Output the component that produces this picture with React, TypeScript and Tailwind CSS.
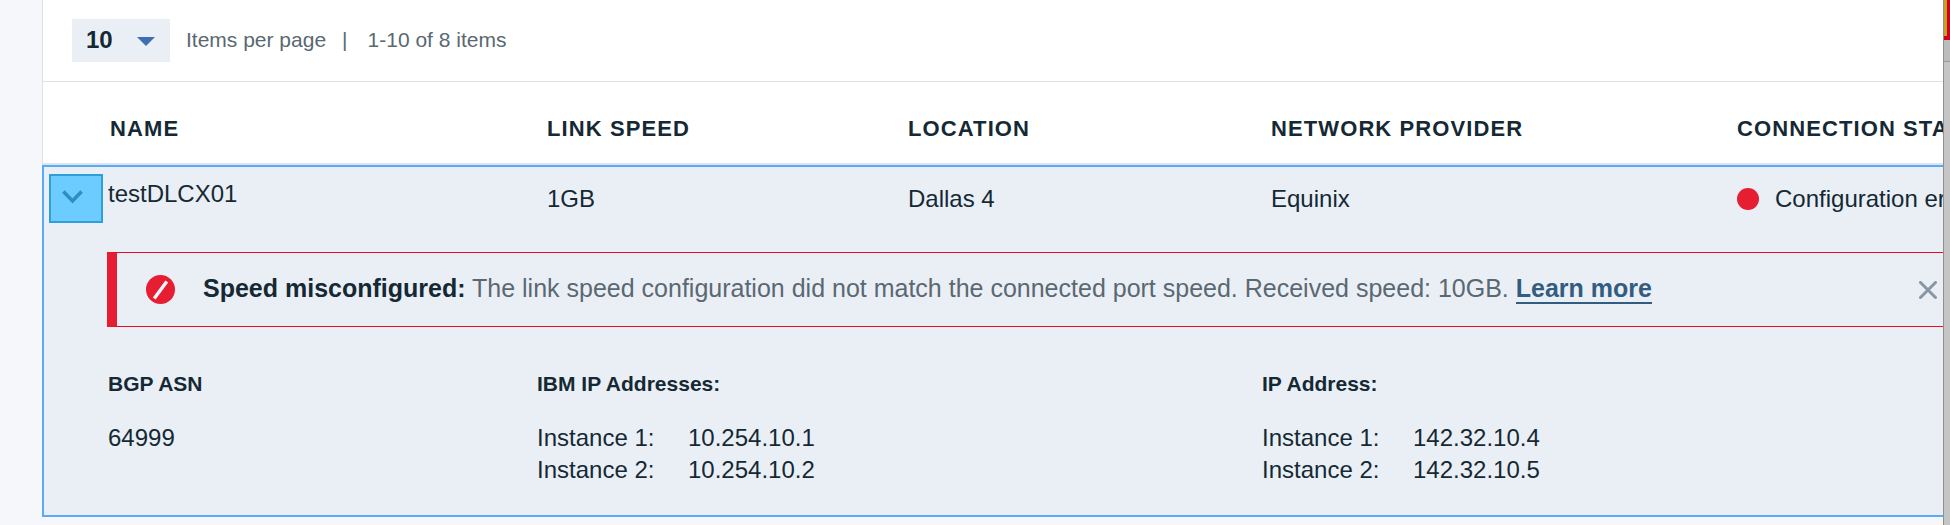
import { ReactNode, useState } from "react";

type Instance = { label: string; ip: string };

const ibmInstances: Instance[] = [
  { label: "Instance 1:", ip: "10.254.10.1" },
  { label: "Instance 2:", ip: "10.254.10.2" },
];

const customerInstances: Instance[] = [
  { label: "Instance 1:", ip: "142.32.10.4" },
  { label: "Instance 2:", ip: "142.32.10.5" },
];

function Toolbar() {
  return (
    <div className="flex h-[82px] items-center border-b border-l border-[#dbe1e5] bg-white pb-px pl-[29px] text-[21px] leading-7 text-[#5a6872]">
      <div className="relative">
        <select
          id="page-size"
          defaultValue="10"
          className="h-[43px] w-[98px] appearance-none bg-[#eaeff6] pl-[14px] text-2xl font-bold text-[#152934]"
        >
          <option>10</option>
          <option>25</option>
          <option>50</option>
        </select>
        <svg className="pointer-events-none absolute right-[15px] top-[18px]" width="18" height="9" viewBox="0 0 18 9" aria-hidden="true">
          <path d="M0 0h18L9 9z" fill="#3d70b2" />
        </svg>
      </div>
      <label htmlFor="page-size" className="ml-4">
        Items per page
      </label>
      <span className="ml-4">|</span>
      <span className="ml-5">1-10 of 8 items</span>
    </div>
  );
}

function HeaderCell({ className = "", children }: { className?: string; children: ReactNode }) {
  return (
    <th
      scope="col"
      className={
        "h-[83px] whitespace-nowrap border-b-2 border-[#dfe6eb] pt-[33px] text-left align-top text-[22px] font-bold leading-7 tracking-wider " +
        className
      }
    >
      {children}
    </th>
  );
}

function Cell({ children }: { children: ReactNode }) {
  return <td className="whitespace-nowrap border-t-2 border-[#5aaafa] pt-4 align-top">{children}</td>;
}

function Alert({ onClose }: { onClose: () => void }) {
  return (
    <div
      role="alert"
      className="ml-[63px] flex h-[75px] items-center border-y border-l-10 border-y-[#e60d24] border-l-[#e71d32] pl-[29px]"
    >
      <svg width="29" height="29" viewBox="0 0 29 29" className="shrink-0" aria-hidden="true">
        <circle cx="14.5" cy="14.5" r="14.5" fill="#e71d32" />
        <path d="M8.2 23.6 20.8 6.4" stroke="#f5f8fc" strokeWidth="3.4" />
      </svg>
      <p className="ml-7 flex-1 whitespace-nowrap pb-1 text-[25px] leading-8 text-[#5a6872]">
        <strong className="text-[#152934]">Speed misconfigured:</strong> The link speed configuration did not match
        the connected port speed. Received speed: 10GB.{" "}
        <a href="#learn-more" className="border-b-2 border-[#325c80] font-bold text-[#325c80]">
          Learn more
        </a>
      </p>
      <button type="button" aria-label="Close" onClick={onClose} className="mr-[6px] shrink-0">
        <svg width="18" height="18" viewBox="0 0 18 18" aria-hidden="true">
          <path d="M1.5 1.5l15 15M16.5 1.5l-15 15" stroke="#8897a2" strokeWidth="3" strokeLinecap="round" />
        </svg>
      </button>
    </div>
  );
}

function Detail({ title, children }: { title: string; children: ReactNode }) {
  return (
    <section>
      <h3 className="text-[21px] font-bold leading-7">{title}</h3>
      <div className="mt-6">{children}</div>
    </section>
  );
}

function InstanceList({ items }: { items: Instance[] }) {
  return (
    <dl className="grid grid-cols-[151px_auto] justify-start">
      {items.map((item) => (
        <div key={item.ip} className="contents">
          <dt>{item.label}</dt>
          <dd>{item.ip}</dd>
        </div>
      ))}
    </dl>
  );
}

function LinksTable() {
  const [open, setOpen] = useState(true);
  const [alertShown, setAlertShown] = useState(true);
  return (
    <table className="w-full table-fixed border-separate border-spacing-0 text-2xl leading-8">
      <colgroup>
        <col className="w-[505px]" />
        <col className="w-[361px]" />
        <col className="w-[363px]" />
        <col className="w-[466px]" />
        <col />
      </colgroup>
      <thead className="bg-white">
        <tr>
          <HeaderCell className="border-l border-l-[#dde2e6] pl-[67px]">NAME</HeaderCell>
          <HeaderCell>LINK SPEED</HeaderCell>
          <HeaderCell>LOCATION</HeaderCell>
          <HeaderCell>NETWORK PROVIDER</HeaderCell>
          <HeaderCell>CONNECTION STATUS</HeaderCell>
        </tr>
      </thead>
      <tbody className="bg-[#eaeff6]">
        <tr className="h-[87px]">
          <td className="border-l-2 border-t-2 border-[#5aaafa] pl-[5px] pt-[7px] align-top">
            <div className="flex items-start gap-[5px]">
              <button
                type="button"
                aria-label="Toggle details"
                aria-expanded={open}
                onClick={() => setOpen(!open)}
                className="flex h-[49px] w-[54px] items-center border-2 border-[#2d9fda] bg-[#6cccff] pb-1 pl-[11px]"
              >
                <svg width="21" height="14" viewBox="0 0 21 14" aria-hidden="true">
                  <path d="M1.4 1.6l9.1 9.4 9.1-9.4" fill="none" stroke="#2b8fc2" strokeWidth="3.6" />
                </svg>
              </button>
              <span className="pt-1">testDLCX01</span>
            </div>
          </td>
          <Cell>1GB</Cell>
          <Cell>Dallas 4</Cell>
          <Cell>Equinix</Cell>
          <Cell>
            <div className="flex items-center gap-4">
              <span className="size-[22px] shrink-0 rounded-full bg-[#e71d32]" />
              Configuration error
            </div>
          </Cell>
        </tr>
        {open && (
          <tr>
            <td colSpan={5} className="border-b-2 border-l-2 border-[#5aaafa] pb-[29px]">
              {alertShown && <Alert onClose={() => setAlertShown(false)} />}
              <div className="grid grid-cols-[429px_725px_1fr] pl-16 pt-[43px]">
                <Detail title="BGP ASN">64999</Detail>
                <Detail title="IBM IP Addresses:">
                  <InstanceList items={ibmInstances} />
                </Detail>
                <Detail title="IP Address:">
                  <InstanceList items={customerInstances} />
                </Detail>
              </div>
            </td>
          </tr>
        )}
      </tbody>
    </table>
  );
}

export default function App() {
  return (
    <div className="flex min-h-screen bg-[#f5f7fb] font-['Liberation_Sans',Arial,sans-serif] text-[#152934]">
      <main className="ml-[42px] min-w-0 flex-1 overflow-hidden">
        <Toolbar />
        <LinksTable />
      </main>
      <div className="flex w-[7px] shrink-0 flex-col border-l border-[#909090] bg-[#c5c5c5]">
        <div className="h-10 border-b-4 border-r-3 border-[#d0021b] bg-[#c4a024]" />
        <div className="h-[22px] border-b border-[#999999] bg-[#bcbcbc]" />
      </div>
    </div>
  );
}
